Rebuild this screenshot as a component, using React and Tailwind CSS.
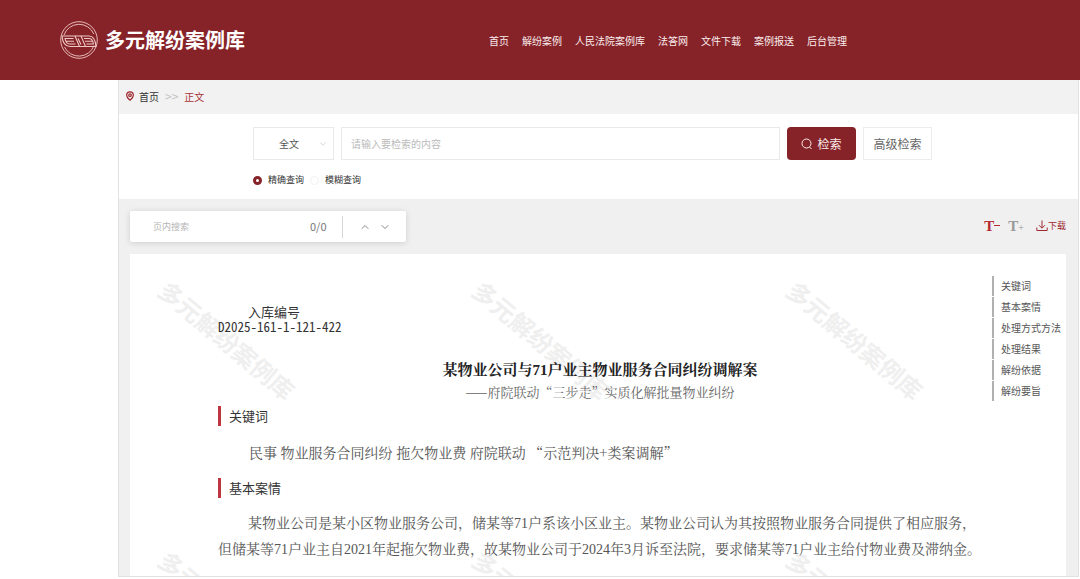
import React from "react";
import { ChevronUp, ChevronDown, MapPin } from "lucide-react";

const SANS = "font-['Noto_Sans_CJK_SC',sans-serif]";
const SONG = "font-['Noto_Serif_CJK_SC','Noto_Sans_CJK_SC',serif]";
const SONG_DIGITS = "font-['Liberation_Serif','Noto_Serif_CJK_SC','Noto_Sans_CJK_SC',serif]";

const NAV = ["首页", "解纷案例", "人民法院案例库", "法答网", "文件下载", "案例报送", "后台管理"];
const SECTIONS = ["关键词", "基本案情", "处理方式方法", "处理结果", "解纷依据", "解纷要旨"];

function Logo() {
  return (
    <svg viewBox="0 0 38 38" className="size-[38px]" fill="none" stroke="#efc9c5" aria-hidden="true">
      <circle cx="19" cy="19" r="18.300" strokeWidth="0.9" />
      <path d="M4 14A16 16 0 0 1 33.800 13M34 24.500A16 16 0 0 1 4.500 26" strokeWidth="0.9" />
      <path d="M2 15H15L19.500 25.500H10C5 25.500 2.500 21 2 15Z" strokeWidth="1.100" />
      <path d="M13.500 17.500H5C5.500 20.500 7 23 10 23H15.500M6 20.200H14" strokeWidth="1.100" />
      <path d="M15 15H21L25.500 25.500H19.500" strokeWidth="1.100" />
      <path d="M18 17.500L21 23.500" strokeWidth="1.100" />
      <path d="M21 15H29C33.500 15 35.500 19.500 36 25.500H25.500" strokeWidth="1.100" />
      <path d="M24 17.500H29C31.500 17.500 33 20 33.300 23H26.500M25 20.200H32" strokeWidth="1.100" />
    </svg>
  );
}

function Watermark() {
  return (
    <div aria-hidden="true" className="pointer-events-none absolute -left-[60px] -top-[49px] grid grid-cols-[repeat(3,314px)] auto-rows-[270px] select-none">
      {Array.from({ length: 6 }, (_, i) => (
        <div key={i} className="flex items-center justify-center">
          <span className="rotate-40 whitespace-nowrap text-2xl font-bold text-[#efefef]">多元解纷案例库</span>
        </div>
      ))}
    </div>
  );
}

function Heading({ children }) {
  return (
    <h2 className="flex h-5 items-center border-l-3 border-[#bd3540] pl-2 text-[13px] text-[#333]">{children}</h2>
  );
}

export default function App() {
  return (
    <div className={`${SANS} flex min-h-screen flex-col bg-white pb-0.5 text-[#444]`}>
      <header className="flex h-20 items-center bg-[#862329] pl-[60px]">
        <a href="#" className="flex w-[429px] items-center gap-[7px] text-xl font-bold text-white">
          <Logo />
          多元解纷案例库
        </a>
        <nav className="flex gap-[13px] text-[10px] text-[#fbeeee]">
          {NAV.map((n) => (
            <a key={n} href="#" className="whitespace-nowrap">{n}</a>
          ))}
        </nav>
      </header>

      <main className="ml-[118px] mr-px flex flex-1 flex-col border-x border-b border-[#e2e2e2] bg-[#f0f0f0]">
        <nav className="flex h-[34px] items-center bg-[#f2f2f2] pb-0.5 pl-1.5 text-[10px]" aria-label="breadcrumb">
          <MapPin className="mr-1 size-2.5 text-[#a02830]" strokeWidth={3} />
          <a href="#" className="text-[#333]">首页</a>
          <span className="mx-1.5 text-xs text-[#c4c4c4]">&gt;&gt;</span>
          <span className="text-[#a83238]">正文</span>
        </nav>

        <form className="h-[85px] bg-white pl-[134px] pt-[13px]" onSubmit={(e) => e.preventDefault()}>
          <div className="flex h-[33px] gap-[7px]">
            <div className="relative w-[81px]">
              <select aria-label="检索范围" className="h-full w-full appearance-none border border-[#e9e9e9] bg-white pl-[25px] text-[10px] text-[#555]">
                <option>全文</option>
              </select>
              <ChevronDown className="pointer-events-none absolute right-1.5 top-3 size-2.5 text-[#ccc]" />
            </div>
            <input aria-label="检索内容" placeholder="请输入要检索的内容" className="w-[439px] border border-[#e9e9e9] px-[9px] text-[10px] placeholder:text-[#bbb]" />
            <button className="flex w-[69px] items-center justify-center gap-1 rounded-sm bg-[#862329] text-xs text-[#fbeeee]">
              <svg viewBox="0 0 12 12" className="size-3" fill="none" stroke="currentColor" aria-hidden="true">
                <circle cx="5.500" cy="5.500" r="4.500" />
                <path d="M8.500 9L10.500 11" />
              </svg>
              检索
            </button>
            <button type="button" className="w-[69px] border border-[#ececec] bg-white text-xs text-[#666]">高级检索</button>
          </div>
          <div className="mt-3 flex h-4 items-center gap-1.5 text-[9px] text-[#333]">
            <label className="flex items-center gap-1.5">
              <input type="radio" name="mode" defaultChecked className="size-[9px] appearance-none rounded-full border-[#862329] bg-white checked:border-3" />
              精确查询
            </label>
            <label className="flex items-center gap-1.5">
              <input type="radio" name="mode" className="size-[9px] appearance-none rounded-full border border-[#f3f0f0] bg-white checked:border-3 checked:border-[#862329]" />
              模糊查询
            </label>
          </div>
        </form>

        <div className="flex items-center justify-between pl-[11px] pr-3 pt-3">
          <div className="flex h-[31px] w-[276px] items-center rounded-xs bg-white pl-[23px] shadow-[0_1px_6px_rgba(0,0,0,0.14)]">
            <input aria-label="页内搜索" placeholder="页内搜索" className="w-[157px] text-[9px] placeholder:text-[#b5b5b5]" />
            <span className="w-8 text-[11px] text-[#777]">0/0</span>
            <div className="flex h-[22px] items-center gap-2 border-l border-[#d5d5d5] pl-4">
              <button type="button" aria-label="上一个"><ChevronUp className="size-3 text-[#888]" /></button>
              <button type="button" aria-label="下一个"><ChevronDown className="size-3 text-[#888]" /></button>
            </div>
          </div>
          <div className="flex items-center pb-0.5">
            <button type="button" aria-label="缩小字号" className="mr-2 flex items-center font-['Liberation_Serif',serif] text-[15px] font-bold leading-4 text-[#b52a31]">
              T<span className="h-px w-1.5 bg-[#b52a31]" />
            </button>
            <button type="button" aria-label="放大字号" className="mr-3 flex items-end font-['Liberation_Serif',serif] text-[15px] font-bold leading-4 text-[#999]">
              T<span className="text-[10px] font-normal leading-3">+</span>
            </button>
            <button type="button" className="flex items-center text-[9px] text-[#a02830]">
              <svg viewBox="0 0 12 12" className="size-3" fill="none" stroke="currentColor" aria-hidden="true">
                <path d="M6 .5V8M3 5.200L6 8.200L9 5.200M.8 7.500V10.500H11.200V7.500" />
              </svg>
              下载
            </button>
          </div>
        </div>

        <article className="relative ml-[11px] mr-3 mt-3 flex-1 overflow-hidden bg-white pb-2 pl-[88px] pt-[50px]">
          <Watermark />
          <nav className="absolute right-1 top-[22px] w-[70px]" aria-label="目录">
            <ul className="flex flex-col gap-px text-[10px] leading-5">
              {SECTIONS.map((s) => (
                <li key={s} className="border-l-2 border-[#b0b0b0] pl-[7px]">
                  <a href="#" className="whitespace-nowrap text-[#555]">{s}</a>
                </li>
              ))}
            </ul>
          </nav>
          <div className="relative max-w-[764px]">
            <div className="w-fit text-[13px] leading-[15px] text-[#333]">
              <p className="pl-[30px]">入库编号</p>
              <p className="font-['Noto_Sans_Mono_CJK_SC','Noto_Sans_CJK_SC',monospace]">D2025-161-1-121-422</p>
            </div>
            <h1 className={`${SONG_DIGITS} mt-6 text-center text-[15px] font-bold leading-6 text-[#222]`}>
              某物业公司与71户业主物业服务合同纠纷调解案
            </h1>
            <p className={`${SONG} text-center text-[13px] leading-5 text-[#666]`}>——府院联动“三步走”实质化解批量物业纠纷</p>
            <div className="mt-1">
              <Heading>关键词</Heading>
              <p className={`${SONG} my-[13px] whitespace-pre pl-[31px] text-[14px] leading-[26px] text-[#555]`}>
                民事 物业服务合同纠纷 拖欠物业费 府院联动 “示范判决+类案调解”
              </p>
              <Heading>基本案情</Heading>
              <p className={`${SONG_DIGITS} mt-[13px] indent-[30px] text-[14px] leading-[26px] text-[#555]`}>
                某物业公司是某小区物业服务公司，储某等71户系该小区业主。某物业公司认为其按照物业服务合同提供了相应服务，
                <br />
                但储某等71户业主自2021年起拖欠物业费，故某物业公司于2024年3月诉至法院，要求储某等71户业主给付物业费及滞纳金。
              </p>
            </div>
          </div>
        </article>
      </main>
    </div>
  );
}
